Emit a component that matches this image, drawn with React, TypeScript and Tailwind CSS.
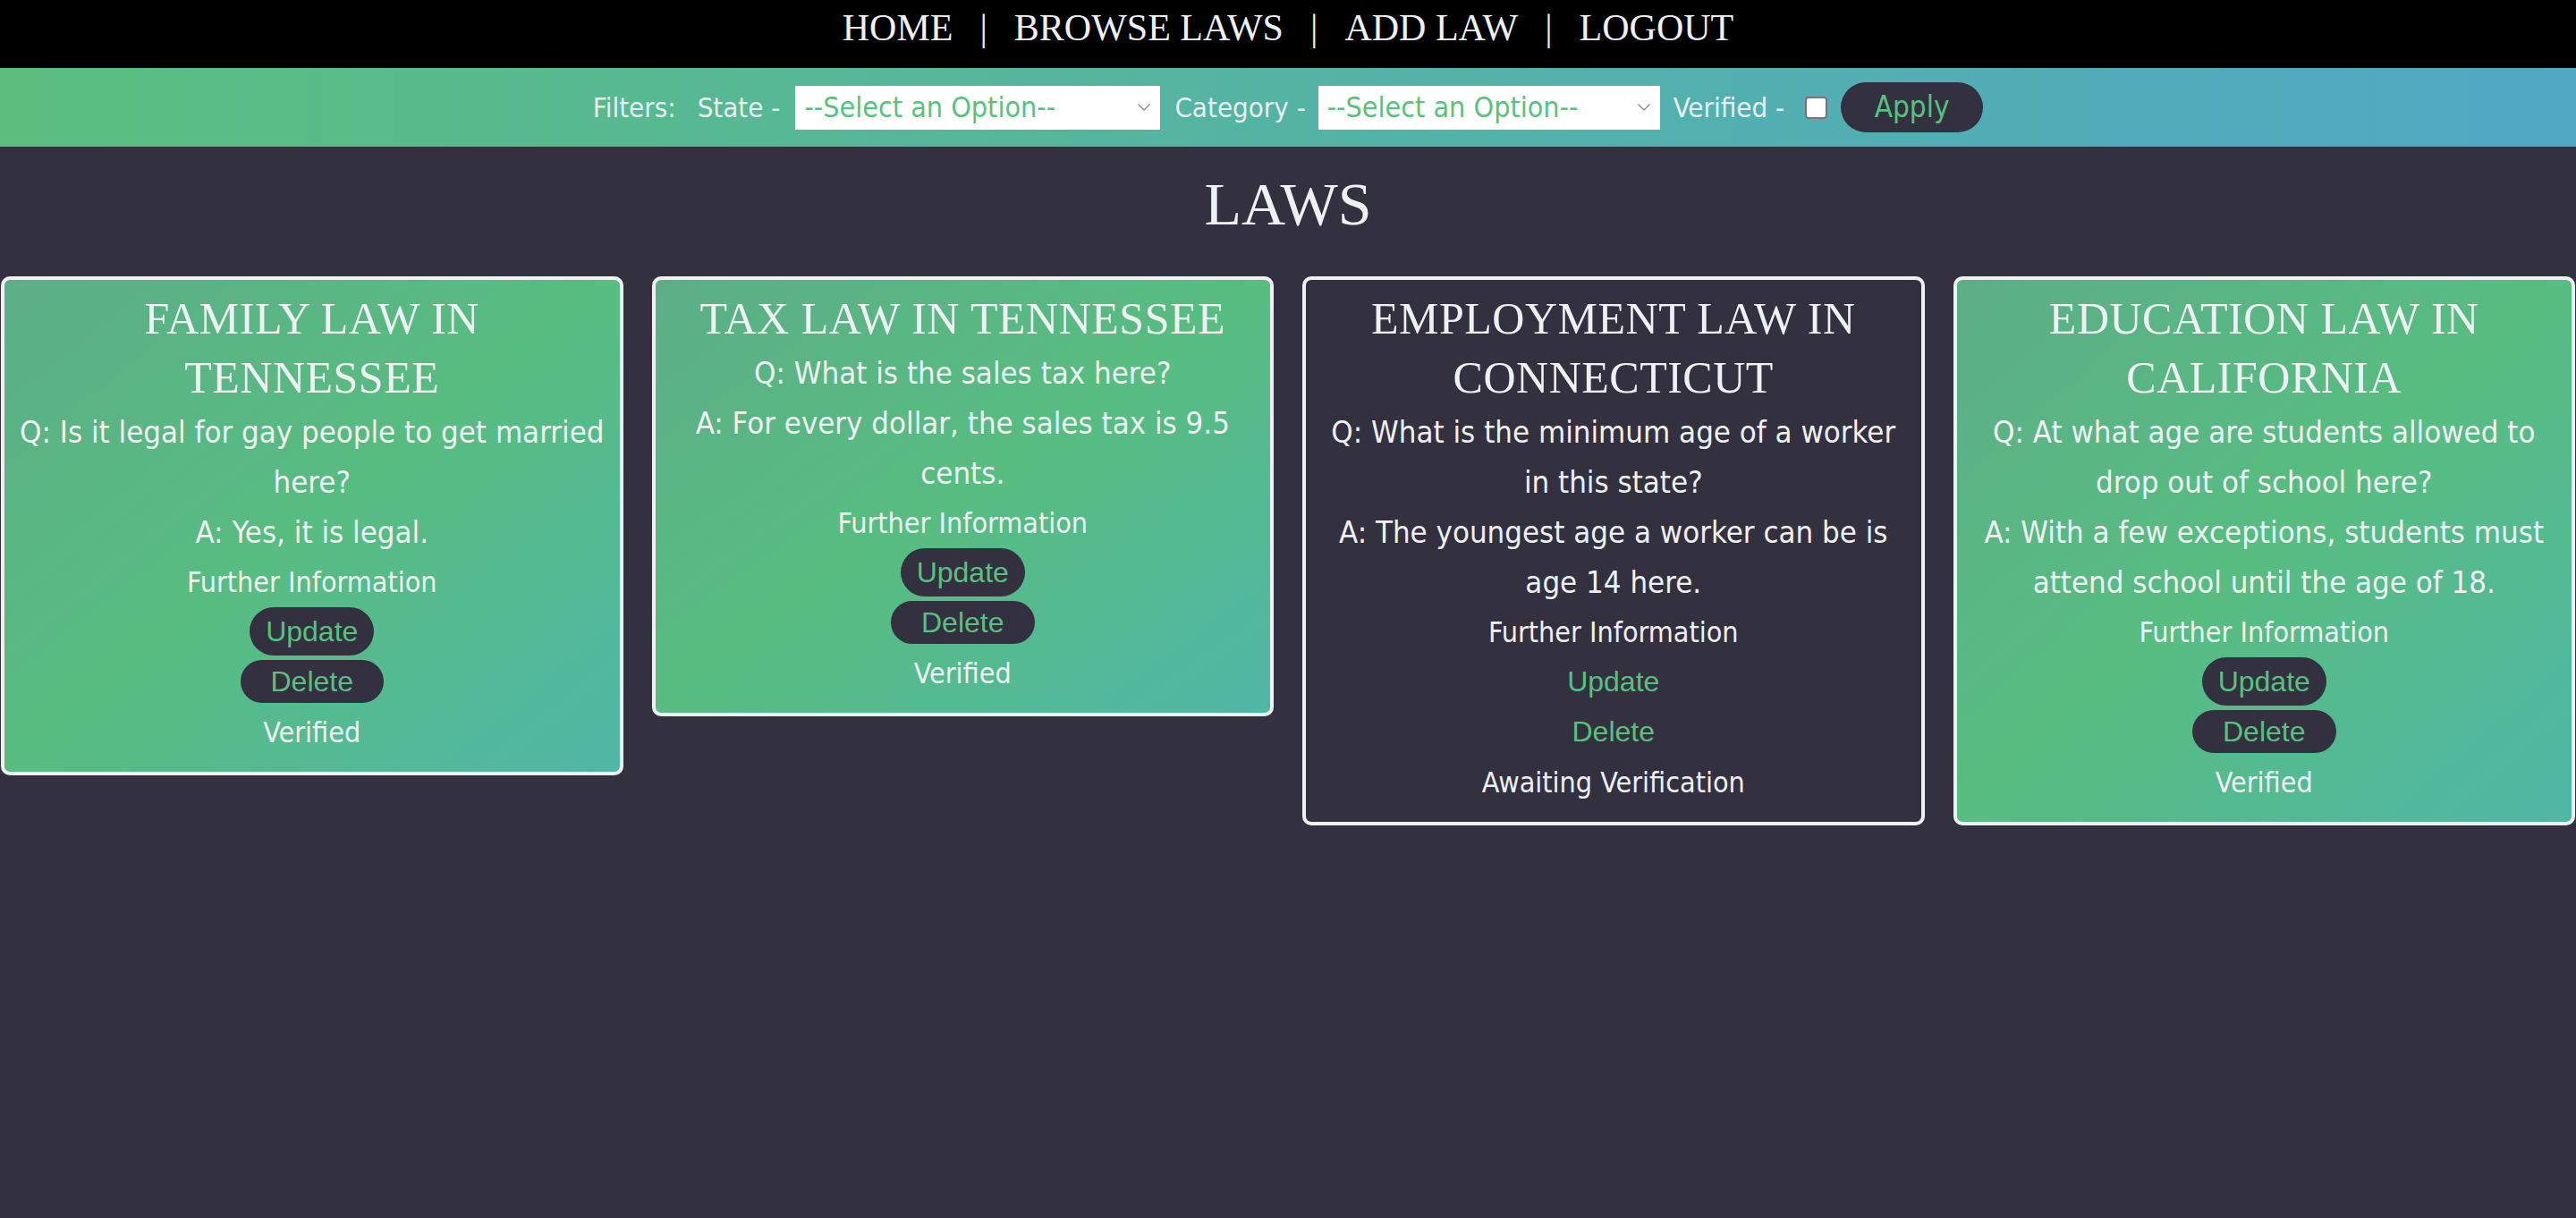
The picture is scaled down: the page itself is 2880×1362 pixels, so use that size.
import React, { useState } from 'react';

type Law = {
  id: number;
  title: string;
  question: string;
  answer: string;
  verified: boolean;
};

const LAWS: Law[] = [
  {
    id: 1,
    title: 'Family Law in Tennessee',
    question: 'Q: Is it legal for gay people to get married here?',
    answer: 'A: Yes, it is legal.',
    verified: true,
  },
  {
    id: 2,
    title: 'Tax Law in Tennessee',
    question: 'Q: What is the sales tax here?',
    answer: 'A: For every dollar, the sales tax is 9.5 cents.',
    verified: true,
  },
  {
    id: 3,
    title: 'Employment Law in Connecticut',
    question: 'Q: What is the minimum age of a worker in this state?',
    answer: 'A: The youngest age a worker can be is age 14 here.',
    verified: false,
  },
  {
    id: 4,
    title: 'Education Law in California',
    question: 'Q: At what age are students allowed to drop out of school here?',
    answer: 'A: With a few exceptions, students must attend school until the age of 18.',
    verified: true,
  },
];

const NAV = ['HOME', 'BROWSE LAWS', 'ADD LAW', 'LOGOUT'];

const Chevron = () => (
  <svg width="16" height="10" viewBox="0 0 16 10" fill="none" className="pointer-events-none absolute right-[10px] top-[19px]">
    <path d="M1.5 1.5l6.5 6.5 6.5-6.5" stroke="#8c8c8c" strokeWidth="1.4" />
  </svg>
);

const FilterSelect = ({ width }: { width: string }) => (
  <div className={`relative ${width}`}>
    <select className="h-[49px] w-full appearance-none bg-white pl-[10px] text-[32px] leading-[49px] text-[#5ac07f] outline-none">
      <option>--Select an Option--</option>
    </select>
    <Chevron />
  </div>
);

const LawCard = ({ law }: { law: Law }) => (
  <div
    className={`rounded-[10px] border-4 border-[#eef0f3] px-[12px] pt-[10px] pb-[19px] text-center text-[#eef0f3] ${
      law.verified ? 'bg-linear-to-br from-[#5cae87] via-[#57bd80] to-[#50b6a6]' : 'bg-[#33303f]'
    }`}
  >
    <h2 className="font-['Liberation_Serif',serif] text-[50px] leading-[66px] tracking-[0.5px] uppercase">
      {law.title}
    </h2>
    <p className="text-[34.5px] leading-[56px]">{law.question}</p>
    <p className="text-[34.5px] leading-[56px]">{law.answer}</p>
    <p className="text-[32px] leading-[56px]">Further Information</p>
    <div className="flex flex-col items-center gap-[5px]">
      <button className="h-[54px] rounded-full bg-[#33303f] px-[18px] font-['Liberation_Sans',sans-serif] text-[32px] text-[#5ac07f]">
        Update
      </button>
      <button className="h-[48px] rounded-full bg-[#33303f] px-[34px] font-['Liberation_Sans',sans-serif] text-[32px] text-[#5ac07f]">
        Delete
      </button>
    </div>
    <p className="mt-2 text-[32px] leading-[50px]">
      {law.verified ? 'Verified' : 'Awaiting Verification'}
    </p>
  </div>
);

export default function App() {
  const [verifiedOnly, setVerifiedOnly] = useState(false);

  return (
    <div className="min-h-screen bg-[#33303f] font-['DejaVu_Sans_Condensed',sans-serif]">
      {/* Nav */}
      <nav className="flex h-[76px] justify-center gap-[30px] bg-black pt-[10px] font-['Liberation_Serif',serif] text-[42px] leading-[42px] text-[#eef0f3]">
        {NAV.map((item, i) => (
          <React.Fragment key={item}>
            {i > 0 && <span>|</span>}
            <a href="#">{item}</a>
          </React.Fragment>
        ))}
      </nav>

      {/* Filters */}
      <div className="flex h-[88px] items-center justify-center bg-linear-to-r from-[#5bbe7e] to-[#4fa8c4] text-[31px] text-[#e9edf0]">
        <span className="mr-[24px]">Filters:</span>
        <span className="mr-[17px]">State -</span>
        <FilterSelect width="w-[408px]" />
        <span className="mr-[14px] ml-[16px]">Category -</span>
        <FilterSelect width="w-[382px]" />
        <span className="mr-[23px] ml-[15px]">Verified -</span>
        <input
          type="checkbox"
          checked={verifiedOnly}
          onChange={(e) => setVerifiedOnly(e.target.checked)}
          className="h-[25px] w-[25px] appearance-none rounded-[4px] border-2 border-[#767676] bg-white"
        />
        <button className="ml-[15px] h-[56px] w-[159px] rounded-full bg-[#33303f] text-[33px] text-[#5ac07f]">
          Apply
        </button>
      </div>

      <h1 className="pt-[30px] pb-[47px] text-center font-['Liberation_Serif',serif] text-[68px] leading-[68px] text-[#eef0f3]">
        LAWS
      </h1>

      <div className="grid grid-cols-4 items-start gap-8 px-px">
        {LAWS.map((law) => (
          <LawCard key={law.id} law={law} />
        ))}
      </div>
    </div>
  );
}
